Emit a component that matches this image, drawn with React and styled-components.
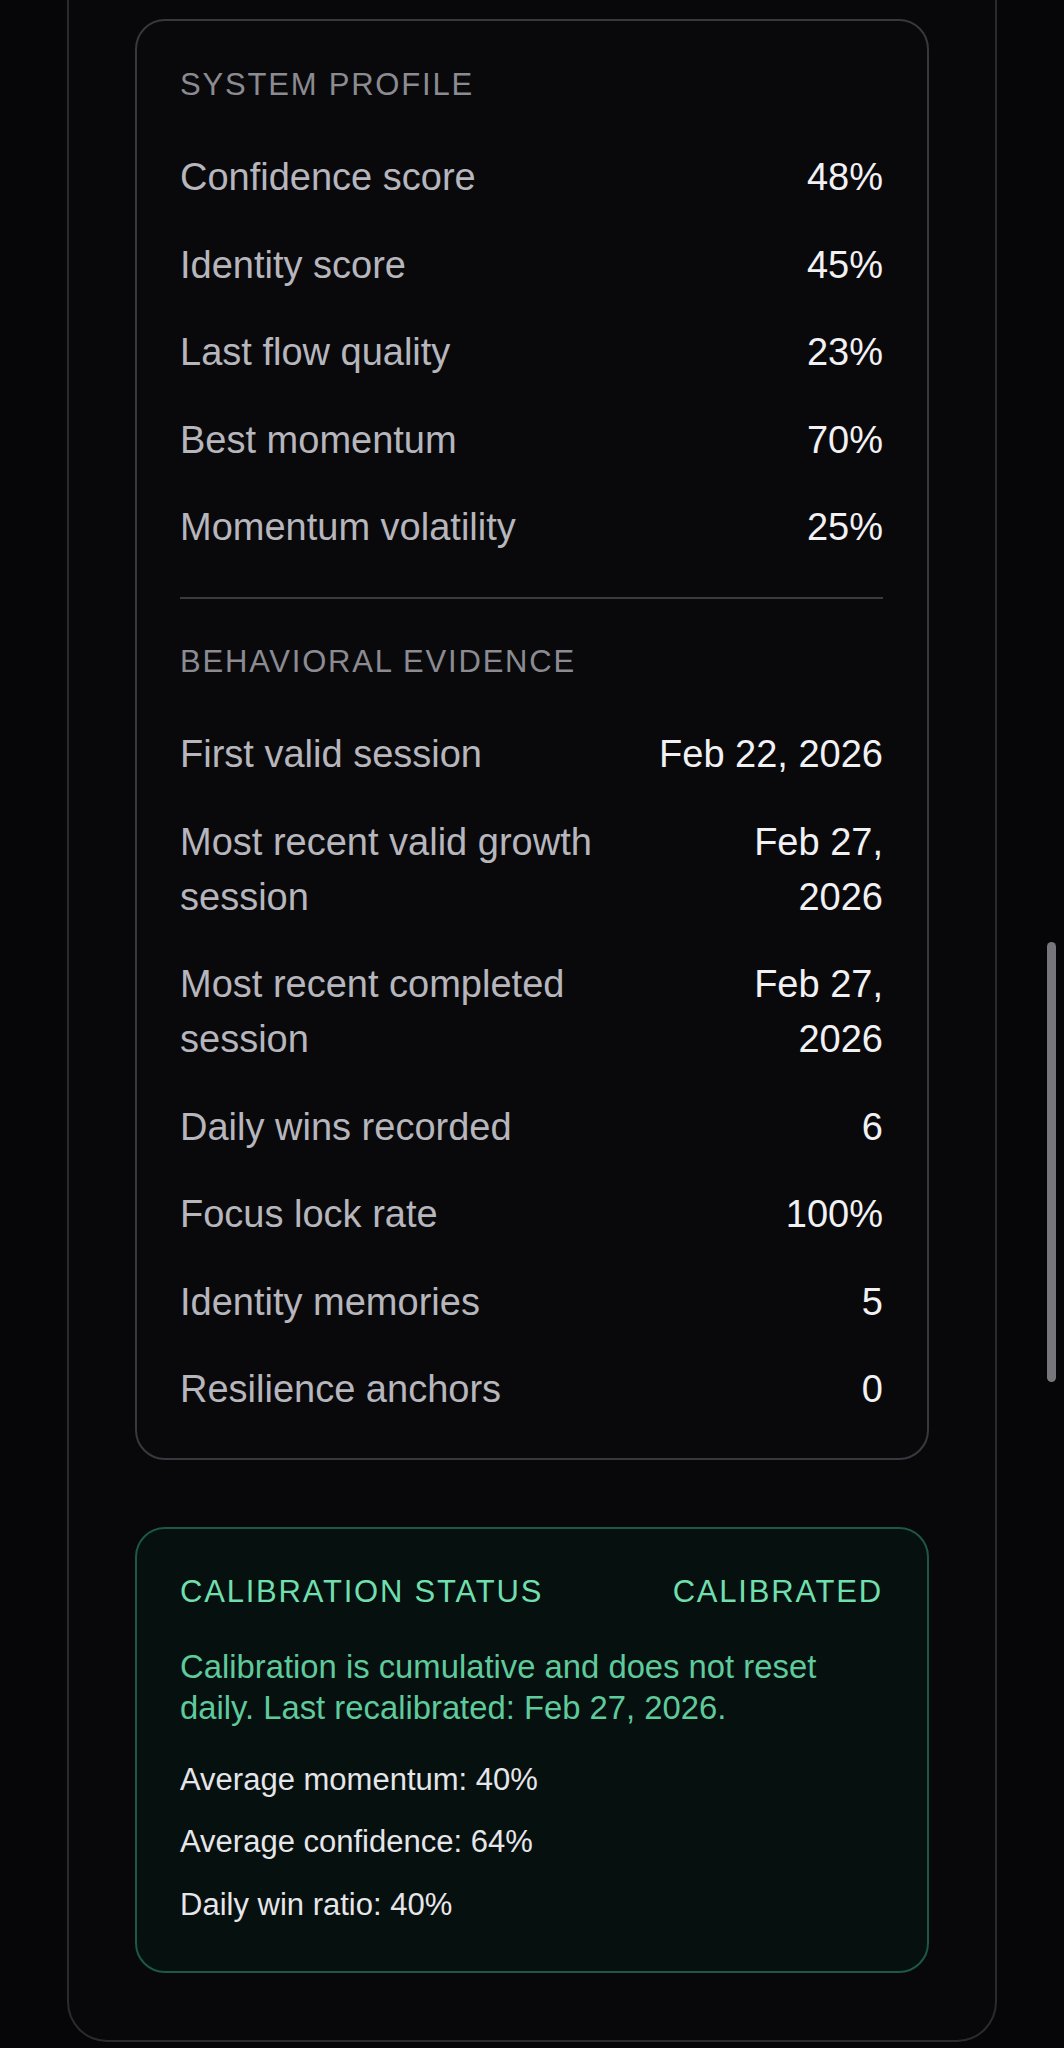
import React from 'react'
import styled, { createGlobalStyle } from 'styled-components'

const GlobalStyle = createGlobalStyle`
  html, body {
    margin: 0;
    padding: 0;
    background: #060608;
  }
  body {
    font-family: "Liberation Sans", Arial, sans-serif;
    -webkit-font-smoothing: antialiased;
  }
`

const Page = styled.div`
  position: relative;
  width: 1064px;
  height: 2048px;
  padding: 0 67px;
  box-sizing: border-box;
  overflow: hidden;
`

const Frame = styled.div`
  border: 2px solid #2a2a2f;
  border-top: none;
  border-radius: 0 0 40px 40px;
  background: #08080b;
  padding: 19px 66px 67px;
  display: flex;
  flex-direction: column;
  gap: 67px;
`

const Card = styled.section`
  border: 2px solid ${p => (p.$accent ? '#1c5843' : '#38383e')};
  background: ${p => (p.$accent ? '#06100f' : '#09090c')};
  border-radius: 30px;
  padding: ${p => (p.$accent ? '42.5px 44px 43px 43px' : '44px 44px 41px 43px')};
  display: flex;
  flex-direction: column;
`

const SectionLabel = styled.div`
  font-size: 31px;
  line-height: 40px;
  letter-spacing: 1.8px;
  text-transform: uppercase;
  color: #8b8b91;
  margin-bottom: 45px;
`

const Rows = styled.div`
  display: flex;
  flex-direction: column;
  gap: 32.5px;
`

const Row = styled.div`
  display: flex;
  justify-content: space-between;
  gap: 16px;
  font-size: 38px;
  line-height: 55px;
`

const Label = styled.span`
  color: #b6b6bc;
`

const Value = styled.span`
  color: #f1f1f3;
  text-align: right;
`

const Divider = styled.hr`
  border: none;
  height: 2px;
  background: #3a3a40;
  margin: 42px 0 43px;
`

const StatusHeader = styled.div`
  display: flex;
  justify-content: space-between;
  font-size: 31px;
  line-height: 40px;
  letter-spacing: 1.8px;
  color: #70dfae;
`

const Note = styled.p`
  margin: 34.5px 0 28.5px;
  font-size: 32.8px;
  line-height: 41px;
  color: #5fca9b;
`

const Stats = styled.div`
  display: flex;
  flex-direction: column;
  gap: 16.5px;
`

const Stat = styled.div`
  font-size: 31px;
  line-height: 46px;
  color: #e6e6ea;
`

const ScrollThumb = styled.div`
  position: absolute;
  right: 8px;
  top: 942px;
  width: 9px;
  height: 440px;
  border-radius: 5px;
  background: #77777b;
`

const profile = [
  ['Confidence score', '48%'],
  ['Identity score', '45%'],
  ['Last flow quality', '23%'],
  ['Best momentum', '70%'],
  ['Momentum volatility', '25%'],
]

const evidence = [
  ['First valid session', 'Feb 22, 2026'],
  ['Most recent valid growth session', 'Feb 27, 2026'],
  ['Most recent completed session', 'Feb 27, 2026'],
  ['Daily wins recorded', '6'],
  ['Focus lock rate', '100%'],
  ['Identity memories', '5'],
  ['Resilience anchors', '0'],
]

const MetricList = ({ items }) => (
  <Rows>
    {items.map(([label, value]) => (
      <Row key={label}>
        <Label>{label}</Label>
        <Value>{value}</Value>
      </Row>
    ))}
  </Rows>
)

const App = () => {
  return (
    <Page>
      <GlobalStyle />
      <Frame>
        <Card>
          <SectionLabel>System profile</SectionLabel>
          <MetricList items={profile} />
          <Divider />
          <SectionLabel>Behavioral evidence</SectionLabel>
          <MetricList items={evidence} />
        </Card>
        <Card $accent>
          <StatusHeader>
            <span>CALIBRATION STATUS</span>
            <span>CALIBRATED</span>
          </StatusHeader>
          <Note>
            Calibration is cumulative and does not reset daily. Last recalibrated: Feb 27, 2026.
          </Note>
          <Stats>
            <Stat>Average momentum: 40%</Stat>
            <Stat>Average confidence: 64%</Stat>
            <Stat>Daily win ratio: 40%</Stat>
          </Stats>
        </Card>
      </Frame>
      <ScrollThumb />
    </Page>
  )
}

export default App
